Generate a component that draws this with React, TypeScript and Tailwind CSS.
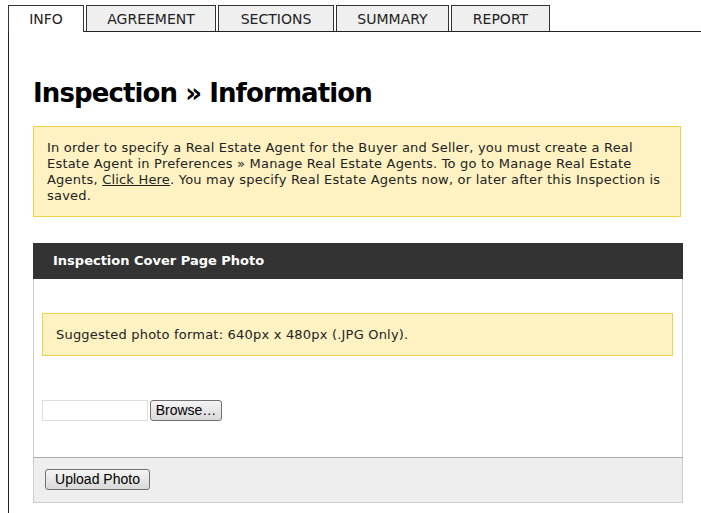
const tabs = [
  { label: 'INFO', w: 'w-[76px]', active: true },
  { label: 'AGREEMENT', w: 'w-[130px]', active: false },
  { label: 'SECTIONS', w: 'w-[116px]', active: false },
  { label: 'SUMMARY', w: 'w-[113px]', active: false },
  { label: 'REPORT', w: 'w-[99px]', active: false },
];

export default function App() {
  return (
    <div className="w-[701px] h-[513px] overflow-hidden bg-white text-[#222] font-['DejaVu_Sans',Verdana,sans-serif]">
      {/* tabs */}
      <div className="flex items-end gap-[2px] pl-[8px] pt-[5px]">
        {tabs.map((t) =>
          t.active ? (
            <div
              key={t.label}
              className={`${t.w} relative z-10 -mb-px flex h-[27px] items-center justify-center border border-b-0 border-[#333] bg-white pt-px text-[14px]`}
            >
              {t.label}
            </div>
          ) : (
            <div
              key={t.label}
              className={`${t.w} flex h-[26px] items-center justify-center border border-b-0 border-[#333] bg-[#efefef] pt-[2px] text-[14px]`}
            >
              {t.label}
            </div>
          )
        )}
      </div>

      {/* content */}
      <div className="ml-[8px] h-[490px] border-l border-t border-[#222] pl-[24px] pr-[18px]">
        <h1 className="pt-[46px] text-[26px] font-bold leading-[30px] tracking-[-0.9px] text-black">
          Inspection » Information
        </h1>

        <div className="mt-[18px] w-[648px] border border-[#f1d146] bg-[#fff2c2] px-[13px] pb-[12px] pt-[13px] text-[13px] leading-[16px] tracking-[0.2px]">
          In order to specify a Real Estate Agent for the Buyer and Seller, you must create a Real
          Estate Agent in Preferences » Manage Real Estate Agents. To go to Manage Real Estate
          Agents, <span className="underline">Click Here</span>. You may specify Real Estate Agents now, or later after this Inspection is
          saved.
        </div>

        {/* photo panel */}
        <div className="mt-[26px] w-[650px]">
          <div className="flex h-[36px] items-center bg-[#333] pl-[20px] text-[13px] font-bold text-white">
            Inspection Cover Page Photo
          </div>
          <div className="border-x border-[#ccc] px-[8px] pb-[36px] pt-[34px]">
            <div className="w-[631px] border border-[#f1d146] bg-[#fff2c2] px-[13px] py-[12px] text-[13px] leading-[17px] tracking-[0.2px]">
              Suggested photo format: 640px x 480px (.JPG Only).
            </div>
            <div className="mt-[44px] flex items-center gap-[2px] font-['Liberation_Sans',Arial,sans-serif]">
              <div className="h-[21px] w-[106px] border border-[#ddd] bg-white" />
              <button className="flex h-[21px] w-[72px] items-center justify-center rounded-[3px] border border-[#707070] bg-gradient-to-b from-[#f4f4f4] to-[#d9d9d9] text-[14px] text-black">
                Browse…
              </button>
            </div>
          </div>
          <div className="border border-t-[#aaa] border-[#ccc] bg-[#eee] pb-[12px] pl-[11px] pt-[11px]">
            <button className="flex h-[21px] w-[105px] items-center justify-center rounded-[3px] border border-[#707070] bg-gradient-to-b from-[#f4f4f4] to-[#d9d9d9] font-['Liberation_Sans',Arial,sans-serif] text-[14px] text-black">
              Upload Photo
            </button>
          </div>
        </div>
      </div>
    </div>
  );
}
